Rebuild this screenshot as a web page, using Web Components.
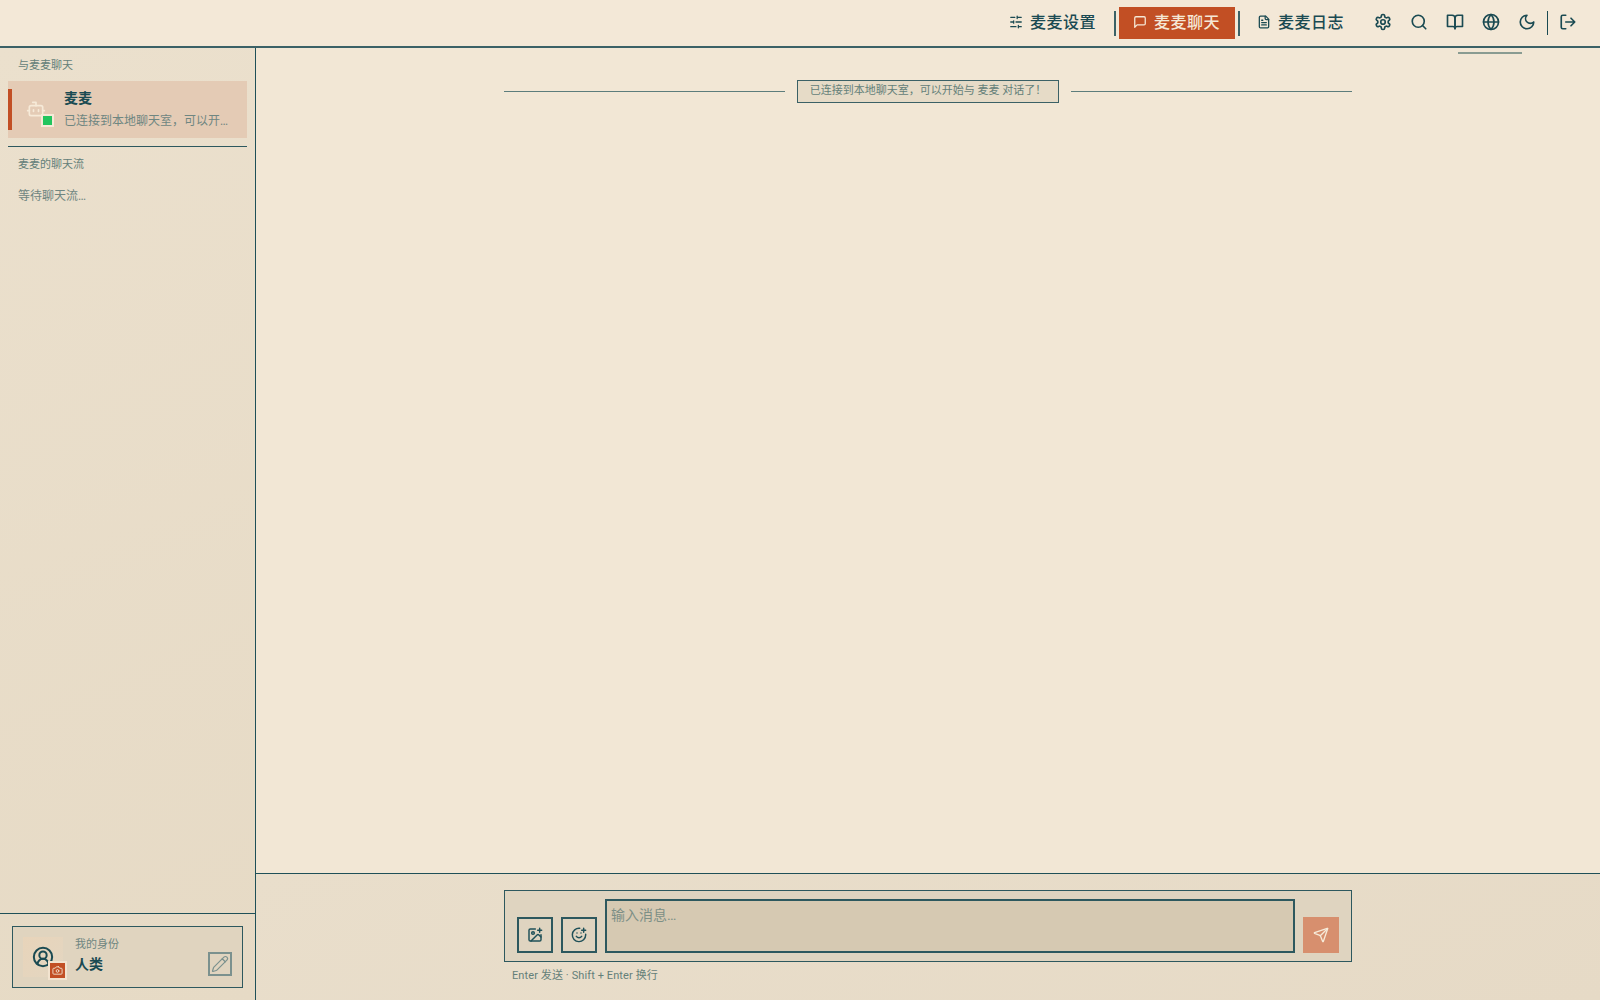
<!DOCTYPE html>
<html lang="zh">
<head>
<meta charset="utf-8">
<title>麦麦聊天</title>
<style>
  html, body { margin: 0; height: 100%; }
  body {
    background: #f2e7d5;
    color: #1a4a52;
    font-family: "Roboto", "Noto Sans CJK SC", sans-serif;
  }
</style>
</head>
<body>
<mm-app>
  <mm-header slot="header"></mm-header>
  <mm-sidebar slot="sidebar"></mm-sidebar>
  <mm-chat slot="main"></mm-chat>
</mm-app>

<script>
const ICONS = {
  sliders: '<path d="M21 4h-7M10 4H3M21 12h-9M8 12H3M21 20h-5M12 20H3M14 2v4M8 10v4M16 18v4"/>',
  message: '<path d="M21 15a2 2 0 0 1-2 2H7l-4 4V5a2 2 0 0 1 2-2h14a2 2 0 0 1 2 2z"/>',
  file: '<path d="M15 2H6a2 2 0 0 0-2 2v16a2 2 0 0 0 2 2h12a2 2 0 0 0 2-2V7Z"/><path d="M14 2v4a2 2 0 0 0 2 2h4"/><path d="M10 9H8M16 13H8M16 17H8"/>',
  settings: '<path d="M12.22 2h-.44a2 2 0 0 0-2 2v.18a2 2 0 0 1-1 1.73l-.43.25a2 2 0 0 1-2 0l-.15-.08a2 2 0 0 0-2.73.73l-.22.38a2 2 0 0 0 .73 2.73l.15.1a2 2 0 0 1 1 1.72v.51a2 2 0 0 1-1 1.74l-.15.09a2 2 0 0 0-.73 2.73l.22.38a2 2 0 0 0 2.73.73l.15-.08a2 2 0 0 1 2 0l.43.25a2 2 0 0 1 1 1.73V20a2 2 0 0 0 2 2h.44a2 2 0 0 0 2-2v-.18a2 2 0 0 1 1-1.73l.43-.25a2 2 0 0 1 2 0l.15.08a2 2 0 0 0 2.73-.73l.22-.39a2 2 0 0 0-.73-2.73l-.15-.08a2 2 0 0 1-1-1.74v-.5a2 2 0 0 1 1-1.74l.15-.09a2 2 0 0 0 .73-2.73l-.22-.38a2 2 0 0 0-2.73-.73l-.15.08a2 2 0 0 1-2 0l-.43-.25a2 2 0 0 1-1-1.73V4a2 2 0 0 0-2-2z"/><circle cx="12" cy="12" r="3"/>',
  search: '<circle cx="11" cy="11" r="8"/><path d="m21 21-4.3-4.3"/>',
  book: '<path d="M2 3h6a4 4 0 0 1 4 4v14a3 3 0 0 0-3-3H2z"/><path d="M22 3h-6a4 4 0 0 0-4 4v14a3 3 0 0 1 3-3h7z"/>',
  globe: '<circle cx="12" cy="12" r="10"/><path d="M12 2a14.5 14.5 0 0 0 0 20 14.5 14.5 0 0 0 0-20"/><path d="M2 12h20"/>',
  moon: '<path d="M12 3a6 6 0 0 0 9 9 9 9 0 1 1-9-9Z"/>',
  logout: '<path d="M9 21H5a2 2 0 0 1-2-2V5a2 2 0 0 1 2-2h4"/><path d="m16 17 5-5-5-5M21 12H9"/>',
  bot: '<path d="M12 8V4H8"/><rect width="16" height="12" x="4" y="8" rx="2"/><path d="M2 14h2M20 14h2M15 13v2M9 13v2"/>',
  user: '<path d="M18 20a6 6 0 0 0-12 0"/><circle cx="12" cy="10" r="4"/><circle cx="12" cy="12" r="10"/>',
  camera: '<path d="M14.5 4h-5L7 7H4a2 2 0 0 0-2 2v9a2 2 0 0 0 2 2h16a2 2 0 0 0 2-2V9a2 2 0 0 0-2-2h-3l-2.5-3z"/><circle cx="12" cy="13" r="3"/>',
  pencil: '<path d="M21.174 6.812a1 1 0 0 0-3.986-3.987L3.842 16.174a2 2 0 0 0-.5.83l-1.321 4.352a.5.5 0 0 0 .623.622l4.353-1.32a2 2 0 0 0 .83-.497z"/><path d="m15 5 4 4"/>',
  imagePlus: '<path d="M16 5h6M19 2v6M21 11.5V19a2 2 0 0 1-2 2H5a2 2 0 0 1-2-2V5a2 2 0 0 1 2-2h7.5"/><path d="m21 15-3.086-3.086a2 2 0 0 0-2.828 0L6 21"/><circle cx="9" cy="9" r="2"/>',
  smilePlus: '<path d="M22 11v1a10 10 0 1 1-9-10"/><path d="M8 14s1.5 2 4 2 4-2 4-2M9 9h.01M15 9h.01M16 5h6M19 2v6"/>',
  send: '<path d="M14.536 21.686a.5.5 0 0 0 .937-.024l6.5-19a.496.496 0 0 0-.635-.635l-19 6.5a.5.5 0 0 0-.024.937l7.93 3.18a2 2 0 0 1 1.112 1.11z"/><path d="m21.854 2.147-10.94 10.939"/>'
};

class MmIcon extends HTMLElement {
  connectedCallback() {
    const size = this.getAttribute("size") || 18;
    const stroke = this.getAttribute("stroke") || 2;
    this.attachShadow({ mode: "open" });
    this.shadowRoot.innerHTML = `
      <style>
        :host { display: inline-flex; flex: none; }
        svg { display: block; fill: none; stroke: currentColor; stroke-linecap: round; stroke-linejoin: round; }
      </style>
      <svg width="${size}" height="${size}" viewBox="0 0 24 24" stroke-width="${stroke}">${ICONS[this.getAttribute("name")]}</svg>`;
  }
}

class MmApp extends HTMLElement {
  constructor() {
    super();
    this.attachShadow({ mode: "open" });
    this.shadowRoot.innerHTML = `
      <style>
        :host {
          display: grid;
          height: 100vh;
          grid-template-columns: 256px 1fr;
          grid-template-rows: 48px 1fr;
          position: relative;
          overflow: hidden;
        }
        ::slotted([slot=header]) { grid-column: 1 / 3; }
        .scroll {
          position: absolute;
          left: 1458px;
          top: 52px;
          width: 64px;
          height: 2px;
          background: #8a9c92;
        }
      </style>
      <slot name="header"></slot>
      <slot name="sidebar"></slot>
      <slot name="main"></slot>
      <div class="scroll"></div>`;
  }
}

class MmHeader extends HTMLElement {
  constructor() {
    super();
    this.attachShadow({ mode: "open" });
    this.shadowRoot.innerHTML = `
      <style>
        :host {
          display: flex;
          box-sizing: border-box;
          height: 48px;
          padding: 0 14px 0 0;
          align-items: center;
          justify-content: flex-end;
          background: #f3e8d7;
          border-bottom: 2px solid #3b6166;
          color: #1a4a52;
        }
        .tabs { display: flex; align-items: center; gap: 3px; margin-right: 6px; }
        .sep { width: 2px; height: 25px; background: #3b6166; }
        .tools { display: flex; align-items: center; }
        .thin { width: 1px; height: 24px; background: #1a4a52; margin: 0 2px; }
      </style>
      <div class="tabs">
        <nav-tab icon="sliders">麦麦设置</nav-tab>
        <div class="sep"></div>
        <nav-tab icon="message" active>麦麦聊天</nav-tab>
        <div class="sep"></div>
        <nav-tab icon="file">麦麦日志</nav-tab>
      </div>
      <div class="tools">
        <tool-button icon="settings"></tool-button>
        <tool-button icon="search"></tool-button>
        <tool-button icon="book"></tool-button>
        <tool-button icon="globe"></tool-button>
        <tool-button icon="moon"></tool-button>
        <div class="thin"></div>
        <tool-button icon="logout"></tool-button>
      </div>`;
  }
}

class NavTab extends HTMLElement {
  constructor() {
    super();
    this.attachShadow({ mode: "open" });
    this.shadowRoot.innerHTML = `
      <style>
        :host {
          display: flex;
          align-items: center;
          gap: 7px;
          box-sizing: border-box;
          height: 32px;
          padding: 0 15px 2px 14px;
          font-size: 16px;
          font-weight: 500;
          letter-spacing: .5px;
          color: #1a4a52;
        }
        :host([active]) { background: #c24f24; color: #f5e8d6; }
        .label { margin-bottom: 2px; }
      </style>
      <mm-icon name="${this.getAttribute("icon")}" size="14" stroke="2.2"></mm-icon>
      <span class="label"><slot></slot></span>`;
  }
}

class ToolButton extends HTMLElement {
  constructor() {
    super();
    this.attachShadow({ mode: "open" });
    this.shadowRoot.innerHTML = `
      <style>
        :host {
          display: flex;
          align-items: center;
          justify-content: center;
          box-sizing: border-box;
          width: 36px;
          height: 32px;
          padding-bottom: 2px;
        }
      </style>
      <mm-icon name="${this.getAttribute("icon")}" size="18" stroke="2.2"></mm-icon>`;
  }
}

class MmSidebar extends HTMLElement {
  constructor() {
    super();
    this.attachShadow({ mode: "open" });
    this.shadowRoot.innerHTML = `
      <style>
        :host {
          display: flex;
          flex-direction: column;
          min-height: 0;
          background: linear-gradient(160deg, #ebe0cd, #e6dac5);
          border-right: 1px solid #1f5058;
        }
        .top { flex: 1; padding: 10px 8px 0; }
        .label { font-size: 11px; line-height: 16px; padding-left: 10px; color: #648079; }
        .first { margin-bottom: 7px; }
        hr { border: 0; height: 1px; background: #2d585e; margin: 8px 0 10px; }
        .wait { font-size: 12px; line-height: 18px; padding-left: 10px; margin-top: 14px; color: #6f8681; }
        .foot { border-top: 1px solid #1f5058; padding: 12px; }
      </style>
      <div class="top">
        <div class="label first">与麦麦聊天</div>
        <chat-item name="麦麦" preview="已连接到本地聊天室，可以开…"></chat-item>
        <hr>
        <div class="label">麦麦的聊天流</div>
        <div class="wait">等待聊天流…</div>
      </div>
      <div class="foot"><identity-card></identity-card></div>`;
  }
}

class ChatItem extends HTMLElement {
  constructor() {
    super();
    this.attachShadow({ mode: "open" });
    this.shadowRoot.innerHTML = `
      <style>
        :host {
          display: flex;
          align-items: center;
          position: relative;
          box-sizing: border-box;
          height: 57px;
          padding-left: 8px;
          background: #e4cbb5;
        }
        .bar { position: absolute; left: 0; top: 8px; bottom: 8px; width: 4px; background: #c24f24; }
        .avatar {
          position: relative;
          box-sizing: border-box;
          width: 40px;
          height: 40px;
          padding-bottom: 2px;
          margin-right: 8px;
          display: flex;
          align-items: center;
          justify-content: center;
          color: #f6ead8;
        }
        .dot {
          position: absolute;
          left: 25px;
          bottom: 3px;
          width: 9px;
          height: 9px;
          background: #22c55e;
          border: 2px solid #f6ead8;
        }
        .text { min-width: 0; }
        .name { font-size: 14px; font-weight: 700; line-height: 20px; margin-top: -1px; margin-bottom: 4px; color: #1a4a52; }
        .preview { font-size: 12px; line-height: 18px; color: #6f8681; white-space: nowrap; }
      </style>
      <div class="bar"></div>
      <div class="avatar">
        <mm-icon name="bot" size="20" stroke="2"></mm-icon>
        <div class="dot"></div>
      </div>
      <div class="text">
        <div class="name">${this.getAttribute("name")}</div>
        <div class="preview">${this.getAttribute("preview")}</div>
      </div>`;
  }
}

class IdentityCard extends HTMLElement {
  constructor() {
    super();
    this.attachShadow({ mode: "open" });
    this.shadowRoot.innerHTML = `
      <style>
        :host {
          display: flex;
          align-items: center;
          box-sizing: border-box;
          height: 62px;
          padding: 0 10px;
          background: #e0d4bf;
          border: 1px solid #2d585e;
        }
        .avatar {
          position: relative;
          width: 40px;
          height: 40px;
          margin-right: 12px;
          display: flex;
          align-items: center;
          justify-content: center;
          background: linear-gradient(135deg, #e8d4ba, #e3d6c1);
          color: #1a4a52;
        }
        .badge {
          position: absolute;
          left: 25px;
          top: 24px;
          width: 15px;
          height: 15px;
          display: flex;
          align-items: center;
          justify-content: center;
          background: #c24f24;
          border: 2px solid #f2e3cf;
          color: #f2e3cf;
        }
        .text { flex: 1; margin-top: -3px; }
        .cap { font-size: 11px; line-height: 16px; color: #6f8681; }
        .who { font-size: 14px; font-weight: 700; line-height: 20px; margin-top: 1px; color: #1a4a52; }
        .edit {
          box-sizing: border-box;
          width: 24px;
          height: 24px;
          margin-top: 14px;
          display: flex;
          align-items: center;
          justify-content: center;
          border: 2px solid #7b918e;
          color: #7b918e;
        }
      </style>
      <div class="avatar">
        <mm-icon name="user" size="22" stroke="2.2"></mm-icon>
        <div class="badge"><mm-icon name="camera" size="11"></mm-icon></div>
      </div>
      <div class="text">
        <div class="cap">我的身份</div>
        <div class="who">人类</div>
      </div>
      <div class="edit"><mm-icon name="pencil" size="18" stroke="1.6"></mm-icon></div>`;
  }
}

class MmChat extends HTMLElement {
  constructor() {
    super();
    this.attachShadow({ mode: "open" });
    this.shadowRoot.innerHTML = `
      <style>
        :host { display: flex; flex-direction: column; min-height: 0; min-width: 0; background: #f2e7d5; }
        .messages { flex: 1; padding-top: 32px; }
        .wrap { width: 848px; margin: 0 auto; }
      </style>
      <div class="messages">
        <div class="wrap"><system-notice>已连接到本地聊天室，可以开始与 麦麦 对话了！</system-notice></div>
      </div>
      <chat-composer></chat-composer>`;
  }
}

class SystemNotice extends HTMLElement {
  constructor() {
    super();
    this.attachShadow({ mode: "open" });
    this.shadowRoot.innerHTML = `
      <style>
        :host { display: flex; align-items: center; gap: 12px; }
        .line { flex: 1; height: 1px; background: #5d7d7c; }
        .box {
          box-sizing: border-box;
          height: 23px;
          padding: 0 12px;
          font-size: 11px;
          line-height: 19px;
          white-space: nowrap;
          color: #648079;
          background: #e6dbc7;
          border: 1px solid #3b6166;
        }
      </style>
      <div class="line"></div>
      <div class="box"><slot></slot></div>
      <div class="line"></div>`;
  }
}

class ChatComposer extends HTMLElement {
  constructor() {
    super();
    this.attachShadow({ mode: "open" });
    this.shadowRoot.innerHTML = `
      <style>
        :host {
          display: block;
          box-sizing: border-box;
          height: 127px;
          padding-top: 16px;
          background: linear-gradient(160deg, #e9decb, #e6dac6);
          border-top: 1px solid #1f5058;
        }
        .wrap { width: 848px; margin: 0 auto; }
        .box {
          display: flex;
          align-items: flex-end;
          gap: 8px;
          box-sizing: border-box;
          height: 72px;
          padding: 8px 12px;
          background: #dfd4c0;
          border: 1px solid #2d585e;
        }
        .btn {
          flex: none;
          box-sizing: border-box;
          width: 36px;
          height: 36px;
          display: flex;
          align-items: center;
          justify-content: center;
          border: 2px solid #2d585e;
          color: #1f5058;
        }
        .input {
          flex: 1;
          box-sizing: border-box;
          height: 54px;
          padding: 2px 4px;
          font-size: 14px;
          line-height: 24px;
          color: #7d8f86;
          background: #d6c9b2;
          border: 2px solid #2d585e;
        }
        .send {
          flex: none;
          width: 36px;
          height: 36px;
          display: flex;
          align-items: center;
          justify-content: center;
          background: #d78f6e;
          color: #f6ead8;
        }
        .hint { margin-top: 6px; padding-left: 8px; font-size: 11px; line-height: 16px; letter-spacing: .1px; color: #648079; }
      </style>
      <div class="wrap">
        <div class="box">
          <div class="btn"><mm-icon name="imagePlus" size="16" stroke="2.2"></mm-icon></div>
          <div class="btn"><mm-icon name="smilePlus" size="16" stroke="2.2"></mm-icon></div>
          <div class="input" role="textbox">输入消息…</div>
          <div class="send"><mm-icon name="send" size="16"></mm-icon></div>
        </div>
        <div class="hint">Enter 发送 · Shift + Enter 换行</div>
      </div>`;
  }
}

customElements.define("mm-icon", MmIcon);
customElements.define("mm-app", MmApp);
customElements.define("mm-header", MmHeader);
customElements.define("nav-tab", NavTab);
customElements.define("tool-button", ToolButton);
customElements.define("mm-sidebar", MmSidebar);
customElements.define("chat-item", ChatItem);
customElements.define("identity-card", IdentityCard);
customElements.define("mm-chat", MmChat);
customElements.define("system-notice", SystemNotice);
customElements.define("chat-composer", ChatComposer);
</script>
</body>
</html>
